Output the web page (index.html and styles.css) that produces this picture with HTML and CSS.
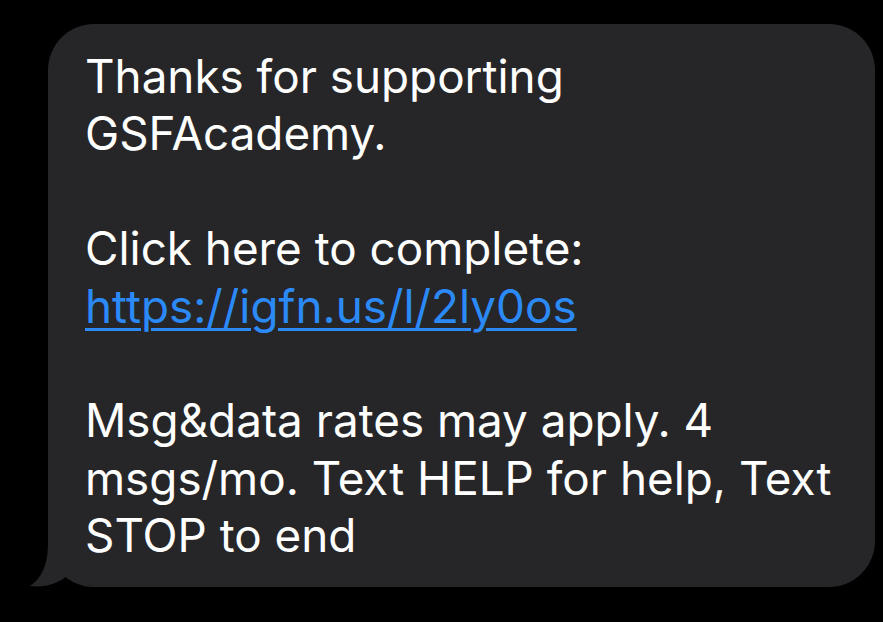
FILE: index.html
```html
<!DOCTYPE html>
<html>
<head>
<meta charset="utf-8">
<link rel="stylesheet" href="styles.css">
</head>
<body>
<div class="bubble">
  <svg class="tail" viewBox="30 537 70 51" width="70" height="51">
    <path d="M48 537 L48 545 C48 566 41 580 30 587 C46 589 58 584 67 577 C76 584 86 587 100 587 L100 537 Z" fill="#262629"/>
  </svg>
  <p class="msg">Thanks for supporting<br>GSFAcademy.<br><br>Click here to complete:<br><a class="link" href="#">https://igfn.us/l/2ly0os</a><br><br>Msg&amp;data rates may apply. 4<br>msgs/mo. Text HELP for help, Text<br>STOP to end</p>
</div>
</body>
</html>
```
FILE: styles.css
```css
html, body {
  margin: 0;
  padding: 0;
  background: #000;
}
body {
  width: 883px;
  height: 622px;
  overflow: hidden;
  padding-top: 24px;
  box-sizing: border-box;
}
.bubble {
  position: relative;
  margin-left: 48px;
  width: 827px;
  box-sizing: border-box;
  background: #262629;
  border-radius: 46px;
  padding: 24px 20px 22px 37px;
}
.msg {
  position: relative;
  z-index: 1;
  margin: 0;
  color: #fff;
  font-family: Inter, "Noto Sans", sans-serif;
  font-size: 45.8px;
  line-height: 57.4px;
}
.link {
  color: #2b8af7;
  text-decoration: underline;
  text-decoration-thickness: 3px;
  text-underline-offset: 5px;
}
.tail {
  position: absolute;
  left: -18px;
  bottom: 0;
  display: block;
}
```
